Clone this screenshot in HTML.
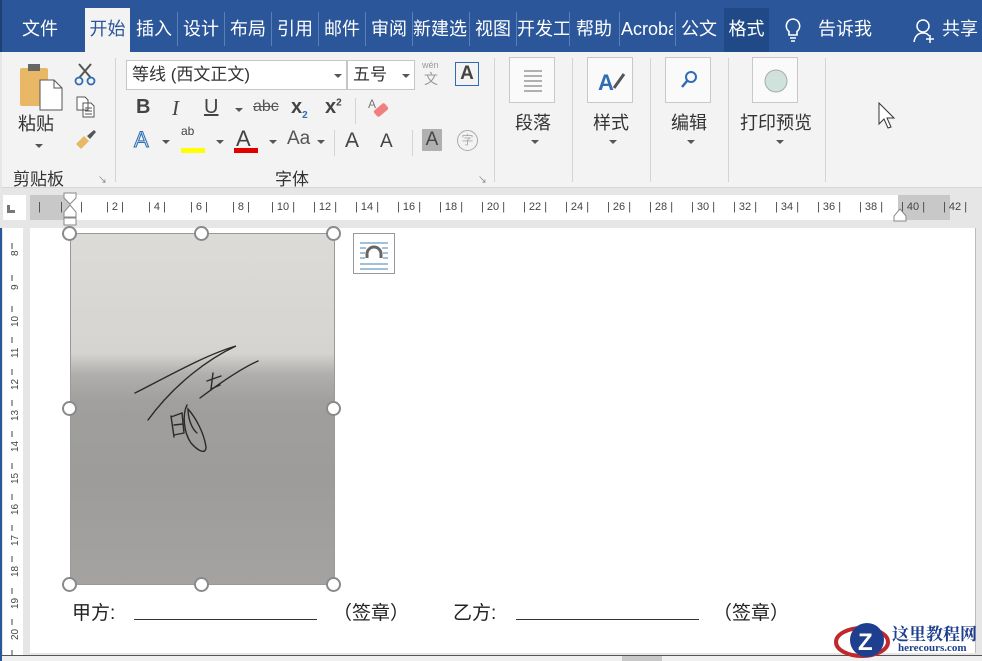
<!DOCTYPE html>
<html><head><meta charset="utf-8">
<style>
*{margin:0;padding:0;box-sizing:border-box}
body{width:982px;height:661px;overflow:hidden;background:#e6e6e6;font-family:"Liberation Sans","Noto Sans CJK SC",sans-serif;position:relative}
.abs{position:absolute}
.tabs{left:0;top:0;width:982px;height:52px;background:#2b579a;border-left:2px solid #1e3f73}
.tab{position:absolute;top:8px;height:44px;line-height:42px;color:#fff;font-size:18px;text-align:center}
.sep{position:absolute;top:12px;width:1px;height:34px;background:#5b80b8}
.ribbon{left:2px;top:52px;width:980px;height:136px;background:#f3f3f3;border-bottom:1px solid #d6d6d6}
.vsep{position:absolute;width:1px;background:#d4d4d4}
.lbl{position:absolute;font-size:17px;color:#333}
.big{position:absolute;width:46px;height:46px;border:1px solid #c8c8c8;background:#fafafa}
.dd{position:absolute;width:0;height:0;border-left:4px solid transparent;border-right:4px solid transparent;border-top:4px solid #555}
.ruler{left:30px;top:195px;width:920px;height:25px;background:#c8c8c8}
.rnum{position:absolute;top:6px;font-size:11px;color:#444}
.doc{left:30px;top:228px;width:946px;height:425px;background:#fff}
.h{position:absolute;width:15px;height:15px;border:2px solid #8a8a8a;border-radius:50%;background:#fff}
.t{position:absolute;font-size:19px;color:#222;font-family:"Liberation Sans","Noto Sans CJK SC",sans-serif}
</style></head><body>
<div class="abs tabs">
  <div class="tab" style="left:8px;width:60px">文件</div>
  <div class="tab" style="left:83px;width:45px;background:#f3f3f3;color:#2b579a">开始</div>
  <div class="tab" style="left:130px;width:44px">插入</div><div class="sep" style="left:175px"></div>
  <div class="tab" style="left:176px;width:46px">设计</div><div class="sep" style="left:222px"></div>
  <div class="tab" style="left:223px;width:46px">布局</div><div class="sep" style="left:269px"></div>
  <div class="tab" style="left:270px;width:46px">引用</div><div class="sep" style="left:316px"></div>
  <div class="tab" style="left:317px;width:46px">邮件</div><div class="sep" style="left:363px"></div>
  <div class="tab" style="left:364px;width:46px">审阅</div><div class="sep" style="left:410px"></div>
  <div class="tab" style="left:411px;width:54px;overflow:hidden;white-space:nowrap">新建选</div><div class="sep" style="left:467px"></div>
  <div class="tab" style="left:468px;width:46px">视图</div><div class="sep" style="left:514px"></div>
  <div class="tab" style="left:515px;width:52px;overflow:hidden;white-space:nowrap">开发工</div><div class="sep" style="left:567px"></div>
  <div class="tab" style="left:568px;width:48px">帮助</div><div class="sep" style="left:617px"></div>
  <div class="tab" style="left:619px;width:52px;overflow:hidden;white-space:nowrap">Acrobat</div><div class="sep" style="left:673px"></div>
  <div class="tab" style="left:674px;width:46px">公文</div>
  <div class="tab" style="left:722px;width:45px;background:#1f4a87">格式</div>
  <svg class="abs" style="left:780px;top:17px" width="22" height="26" viewBox="0 0 22 26"><path d="M11 2a7 7 0 0 0-4 12.5V18h8v-3.5A7 7 0 0 0 11 2z" fill="none" stroke="#fff" stroke-width="1.6"/><path d="M8 21h6M9 24h4" stroke="#fff" stroke-width="1.6"/></svg>
  <div class="tab" style="left:810px;width:66px">告诉我</div>
  <svg class="abs" style="left:911px;top:18px" width="24" height="26" viewBox="0 0 24 26"><circle cx="10" cy="8" r="6" fill="none" stroke="#fff" stroke-width="1.5"/><path d="M1 24c1-6 4-9 9-9 3 0 5 1 6 3M17 17v8M13 21h8" fill="none" stroke="#fff" stroke-width="1.5"/></svg>
  <div class="tab" style="left:940px;width:42px;text-align:left">共享</div>
</div>
<div class="abs ribbon">
  <svg class="abs" style="left:16px;top:10px" width="46" height="50" viewBox="0 0 46 50"><rect x="2" y="6" width="28" height="38" rx="2" fill="#e8b866"/><rect x="10" y="2" width="12" height="7" fill="#666"/><path d="M22 18h14l8 8v22H22z" fill="#fff" stroke="#555"/><path d="M36 18v8h8" fill="none" stroke="#555"/></svg>
  <div class="lbl" style="left:16px;top:58px;font-size:18px">粘贴</div>
  <div class="dd" style="left:33px;top:92px"></div>
  <svg class="abs" style="left:72px;top:10px" width="22" height="24" viewBox="0 0 22 24"><path d="M5 2l12 14M17 2L5 16" stroke="#555" stroke-width="2"/><circle cx="5" cy="19" r="3.5" fill="none" stroke="#2e6cb3" stroke-width="1.8"/><circle cx="17" cy="19" r="3.5" fill="none" stroke="#2e6cb3" stroke-width="1.8"/></svg>
  <svg class="abs" style="left:74px;top:44px" width="20" height="22" viewBox="0 0 20 22"><path d="M1 1h8l3 3v10H1z M7 7h8l3 3v11H7z" fill="#fff" stroke="#555"/><path d="M9 12h7M9 15h7M9 18h7" stroke="#555"/></svg>
  <svg class="abs" style="left:72px;top:76px" width="24" height="22" viewBox="0 0 24 22"><path d="M2 16l8-8 5 5-8 8z" fill="#e8b866"/><path d="M13 8l7-6 2 2-6 7z" fill="#555"/></svg>
  <div class="lbl" style="left:11px;top:113px">剪贴板</div>
  <div class="abs" style="left:96px;top:121px;font-size:9px;color:#777">↘</div>
  <div class="vsep" style="left:113px;top:6px;height:124px"></div>
  <div class="abs" style="left:124px;top:8px;width:221px;height:30px;background:#fff;border:1px solid #c6c6c6;font-size:17px;line-height:28px;padding-left:5px;color:#333">等线 (西文正文)</div>
  <div class="dd" style="left:332px;top:22px"></div>
  <div class="abs" style="left:345px;top:8px;width:68px;height:30px;background:#fff;border:1px solid #c6c6c6;font-size:17px;line-height:28px;padding-left:5px;color:#333">五号</div>
  <div class="dd" style="left:400px;top:22px"></div>
  <div class="abs" style="left:420px;top:8px;font-size:9px;color:#999">wén</div>
  <div class="abs" style="left:422px;top:17px;font-size:14px;color:#999">文</div>
  <div class="abs" style="left:453px;top:10px;width:24px;height:24px;border:1.5px solid #2e6cb3;font-size:19px;line-height:22px;text-align:center;color:#444;font-weight:bold">A</div>
  <div class="abs" style="left:134px;top:44px;font-size:20px;font-weight:bold;color:#444">B</div>
  <div class="abs" style="left:170px;top:44px;font-size:21px;font-style:italic;font-family:'Liberation Serif',serif;color:#444">I</div>
  <div class="abs" style="left:202px;top:44px;font-size:20px;color:#444;text-decoration:underline">U</div>
  <div class="dd" style="left:233px;top:56px"></div>
  <div class="abs" style="left:251px;top:46px;font-size:16px;color:#555;text-decoration:line-through">abc</div>
  <div class="abs" style="left:289px;top:44px;font-size:20px;color:#444;font-weight:bold">x<sub style="font-size:10px;color:#2e6cb3">2</sub></div>
  <div class="abs" style="left:323px;top:44px;font-size:20px;color:#444;font-weight:bold">x<sup style="font-size:10px">2</sup></div>
  <div class="vsep" style="left:353px;top:46px;height:26px"></div>
  <svg class="abs" style="left:364px;top:44px" width="24" height="24"><text x="2" y="12" font-size="12" fill="#777" font-family="Liberation Sans">A</text><rect x="8" y="10" width="14" height="8" rx="2" transform="rotate(-40 15 14)" fill="#f08080"/></svg>
  <div class="abs" style="left:132px;top:75px;font-size:22px;color:#cfe2f7;-webkit-text-stroke:1px #2e6cb3">A</div>
  <div class="dd" style="left:160px;top:88px"></div>
  <div class="abs" style="left:179px;top:72px;font-size:12px;color:#444">ab</div>
  <div class="abs" style="left:179px;top:96px;width:24px;height:5px;background:#ffff00"></div>
  <div class="dd" style="left:214px;top:88px"></div>
  <div class="abs" style="left:234px;top:74px;font-size:22px;color:#444">A</div>
  <div class="abs" style="left:232px;top:96px;width:24px;height:5px;background:#e00000"></div>
  <div class="dd" style="left:267px;top:88px"></div>
  <div class="abs" style="left:285px;top:76px;font-size:19px;color:#555">Aa</div>
  <div class="dd" style="left:315px;top:88px"></div>
  <div class="vsep" style="left:332px;top:78px;height:26px"></div>
  <div class="abs" style="left:343px;top:77px;font-size:21px;color:#444">A</div>
  <div class="abs" style="left:378px;top:79px;font-size:19px;color:#444">A</div>
  <div class="vsep" style="left:410px;top:78px;height:26px"></div>
  <div class="abs" style="left:420px;top:77px;width:20px;height:22px;background:#b0b0b0;font-size:19px;line-height:22px;text-align:center;color:#444">A</div>
  <div class="abs" style="left:455px;top:78px;width:21px;height:21px;border:1.5px solid #aaa;border-radius:50%;font-size:12px;line-height:18px;text-align:center;color:#aaa">字</div>
  <div class="lbl" style="left:273px;top:113px">字体</div>
  <div class="abs" style="left:476px;top:121px;font-size:9px;color:#777">↘</div>
  <div class="vsep" style="left:492px;top:6px;height:124px"></div>
  <div class="big" style="left:507px;top:5px"><svg width="46" height="46"><path d="M14 13h18M14 18h18M14 23h18M14 28h18M14 33h18" stroke="#666"/></svg></div>
  <div class="lbl" style="left:513px;top:57px;font-size:18px">段落</div>
  <div class="dd" style="left:529px;top:88px"></div>
  <div class="vsep" style="left:570px;top:6px;height:124px"></div>
  <div class="big" style="left:585px;top:5px"><svg width="46" height="46"><text x="10" y="32" font-size="22" font-weight="bold" fill="#2e6cb3" font-family="Liberation Sans">A</text><path d="M26 30l10-14" stroke="#555" stroke-width="3"/></svg></div>
  <div class="lbl" style="left:591px;top:57px;font-size:18px">样式</div>
  <div class="dd" style="left:607px;top:88px"></div>
  <div class="vsep" style="left:648px;top:6px;height:124px"></div>
  <div class="big" style="left:663px;top:5px"><svg width="46" height="46"><circle cx="25" cy="19" r="5" fill="none" stroke="#2e6cb3" stroke-width="2"/><path d="M21 23l-5 6" stroke="#2e6cb3" stroke-width="2.5"/></svg></div>
  <div class="lbl" style="left:669px;top:57px;font-size:18px">编辑</div>
  <div class="dd" style="left:685px;top:88px"></div>
  <div class="vsep" style="left:726px;top:6px;height:124px"></div>
  <div class="big" style="left:750px;top:5px"><svg width="46" height="46"><circle cx="23" cy="23" r="11" fill="#cfe3dc" stroke="#aaa"/></svg></div>
  <div class="lbl" style="left:738px;top:57px;font-size:18px">打印预览</div>
  <div class="dd" style="left:774px;top:88px"></div>
  <div class="vsep" style="left:823px;top:6px;height:124px"></div>
  <svg class="abs" style="left:876px;top:50px" width="20" height="30" viewBox="0 0 20 30"><path d="M1 1v21l5-5 4 9 3-1-4-9h7z" fill="#fff" stroke="#333"/></svg>
</div>
<div class="abs" style="left:2px;top:189px;width:980px;height:39px;background:#e6e6e6"></div>
<div class="abs" style="left:3px;top:195px;width:23px;height:25px;background:#fff"></div>
<div class="abs" style="left:7px;top:205px;width:8px;height:8px;border-left:3px solid #777;border-bottom:3px solid #777"></div>
<div class="abs ruler"></div>
<div class="abs" style="left:70px;top:195px;width:828px;height:25px;background:#fff"></div>
<div class="abs" style="left:30px;top:195px;width:950px;height:25px;font-size:11px;color:#444">
  <span class="rnum" style="left:8px">|</span><span class="rnum" style="left:30px">|</span>
  <span class="rnum" style="left:50px">|</span>
  <span class="rnum" style="left:76px">| 2 |</span><span class="rnum" style="left:118px">| 4 |</span><span class="rnum" style="left:160px">| 6 |</span><span class="rnum" style="left:202px">| 8 |</span><span class="rnum" style="left:241px">| 10 |</span><span class="rnum" style="left:283px">| 12 |</span><span class="rnum" style="left:325px">| 14 |</span><span class="rnum" style="left:367px">| 16 |</span><span class="rnum" style="left:409px">| 18 |</span><span class="rnum" style="left:451px">| 20 |</span><span class="rnum" style="left:493px">| 22 |</span><span class="rnum" style="left:535px">| 24 |</span><span class="rnum" style="left:577px">| 26 |</span><span class="rnum" style="left:619px">| 28 |</span><span class="rnum" style="left:661px">| 30 |</span><span class="rnum" style="left:703px">| 32 |</span><span class="rnum" style="left:745px">| 34 |</span><span class="rnum" style="left:787px">| 36 |</span><span class="rnum" style="left:829px">| 38 |</span><span class="rnum" style="left:871px">| 40 |</span><span class="rnum" style="left:913px">| 42 |</span>
</div>
<svg class="abs" style="left:63px;top:192px" width="14" height="40"><path d="M1 1h12v5l-6 6-6-6z M7 13l6 7v5H1v-5z" fill="#fff" stroke="#888"/><rect x="1" y="26" width="12" height="7" fill="#fff" stroke="#888"/></svg>
<svg class="abs" style="left:893px;top:208px" width="14" height="14"><path d="M7 1l6 7v5H1V8z" fill="#fff" stroke="#888"/></svg>
<div class="abs" style="left:0;top:228px;width:2px;height:433px;background:#2b579a"></div>
<div class="abs" style="left:3px;top:228px;width:20px;height:428px;background:#fff"></div>
<div class="abs" style="left:23px;top:228px;width:7px;height:428px;background:#e6e6e6"></div>
<svg class="abs" style="left:3px;top:228px" width="20" height="428">
  <g font-size="10" fill="#444" font-family="Liberation Sans">
    <text transform="translate(15,28) rotate(-90)">8</text>
    <text transform="translate(15,62) rotate(-90)">9</text>
    <text transform="translate(15,99) rotate(-90)">10</text>
    <text transform="translate(15,130) rotate(-90)">11</text>
    <text transform="translate(15,162) rotate(-90)">12</text>
    <text transform="translate(15,193) rotate(-90)">13</text>
    <text transform="translate(15,224) rotate(-90)">14</text>
    <text transform="translate(15,256) rotate(-90)">15</text>
    <text transform="translate(15,287) rotate(-90)">16</text>
    <text transform="translate(15,318) rotate(-90)">17</text>
    <text transform="translate(15,349) rotate(-90)">18</text>
    <text transform="translate(15,381) rotate(-90)">19</text>
    <text transform="translate(15,412) rotate(-90)">20</text>
  </g>
  <g stroke="#444"><path d="M9 15v6M9 47v6M9 78v6M9 109v6M9 141v6M9 172v6M9 203v6M9 235v6M9 266v6M9 297v6M9 328v6M9 360v6M9 391v6M9 422v6"/></g>
</svg>
<div class="abs doc"></div>
<div class="abs" style="left:975px;top:228px;width:1px;height:425px;background:#bbb"></div>
<div class="abs" style="left:2px;top:655px;width:980px;height:6px;background:#f0f0f0;border-top:1px solid #555"></div>
<div class="abs" style="left:622px;top:656px;width:40px;height:5px;background:#c8c8c8"></div>
<div class="abs" style="left:70px;top:233px;width:265px;height:352px;border:1px solid #999;background:linear-gradient(180deg,#dddbd8 0%,#d6d4d1 34%,#b0afad 40%,#a09f9d 48%,#9d9c9a 70%,#a4a3a1 100%)"></div>
<svg class="abs" style="left:70px;top:233px" width="265" height="352" viewBox="0 0 265 352">
  <g fill="none" stroke="#2a2a2a" stroke-width="1.4" stroke-linecap="round">
    <path d="M65 160 C95 145 135 122 166 113 C140 125 105 150 78 187"/>
    <path d="M130 165 C150 150 170 136 188 128"/>
    <path d="M137 148 L151 143 M143 140 L141 156 L150 152"/>
    <path d="M101 183 L104 204 M101 184 L112 180 L114 200 L104 202 M104 192 L113 191"/>
    <path d="M117 172 C112 182 114 200 121 210 C128 218 136 222 136 214 C134 200 126 185 118 176 C118 186 122 196 127 200"/>
  </g>
</svg>
<div class="h" style="left:62px;top:226px"></div><div class="h" style="left:194px;top:226px"></div><div class="h" style="left:326px;top:226px"></div>
<div class="h" style="left:62px;top:401px"></div><div class="h" style="left:326px;top:401px"></div>
<div class="h" style="left:62px;top:577px"></div><div class="h" style="left:194px;top:577px"></div><div class="h" style="left:326px;top:577px"></div>
<div class="abs" style="left:353px;top:233px;width:42px;height:41px;border:1px solid #999;background:#fff"></div>
<svg class="abs" style="left:355px;top:235px" width="38" height="37"><g stroke="#4a7fb5"><path d="M5 8h28M5 29h28M5 34h28M5 13h6M27 13h6M5 18h5M28 18h5M5 23h5M28 23h5"/></g><path d="M12 23v-4a7 7 0 0 1 14 0v4" fill="none" stroke="#666" stroke-width="3"/></svg>
<div class="t" style="left:72px;top:598px">甲方:</div>
<div class="abs" style="left:134px;top:619px;width:183px;height:1px;background:#333"></div>
<div class="t" style="left:333px;top:598px">（签章）</div>
<div class="t" style="left:453px;top:598px">乙方:</div>
<div class="abs" style="left:516px;top:619px;width:183px;height:1px;background:#333"></div>
<div class="t" style="left:713px;top:598px">（签章）</div>
<svg class="abs" style="left:834px;top:618px" width="62" height="43"><ellipse cx="28" cy="24" rx="26" ry="14" fill="none" stroke="#c0282b" stroke-width="4"/><circle cx="33" cy="22" r="17" fill="#1e3f8f"/><text x="24" y="32" font-size="24" font-weight="bold" fill="#fff" font-family="Liberation Sans">Z</text></svg>
<div class="abs" style="left:892px;top:620px;font-size:17px;font-weight:bold;color:#1e3f8f;font-family:'Liberation Serif','Noto Serif CJK SC',serif">这里教程网</div>
<div class="abs" style="left:898px;top:642px;font-size:11px;font-weight:bold;color:#1e3f8f;font-family:'Liberation Serif',serif">herecours.com</div>
</body></html>
